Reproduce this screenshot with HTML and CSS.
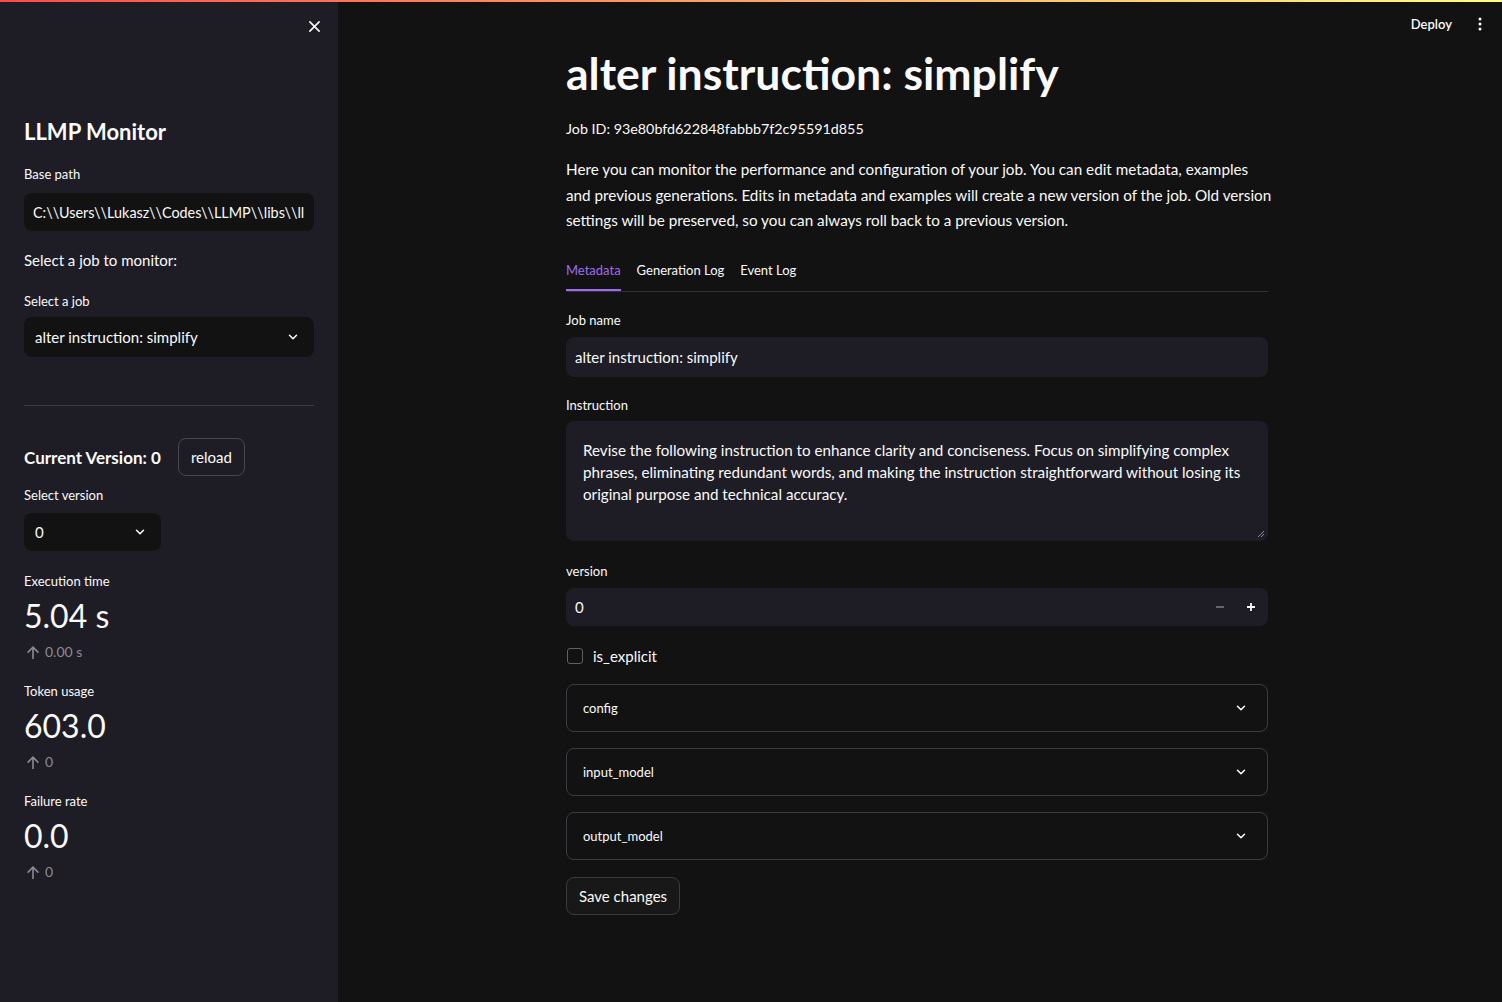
FILE: index.html
```html
<!DOCTYPE html>
<html lang="en">
<head>
<meta charset="utf-8">
<title>LLMP Monitor</title>
<link rel="stylesheet" href="styles.css">
</head>
<body>
<div class="decoration"></div>
<div class="app">
  <aside class="sidebar">
    <div class="sb-top">
      <button class="icon-btn close" aria-label="Close sidebar">
        <svg width="13" height="13" viewBox="0 0 14 14"><path d="M2 2L12 12M12 2L2 12" stroke="#fafafa" stroke-width="1.7" stroke-linecap="round"/></svg>
      </button>
    </div>
    <h2 class="sb-title">LLMP Monitor</h2>
    <div class="label sb-l1">Base path</div>
    <div class="field dark path"><span class="clip">C:\\Users\\Lukasz\\Codes\\LLMP\\libs\\ll</span></div>
    <p class="sb-text">Select a job to monitor:</p>
    <div class="label sb-l2">Select a job</div>
    <div class="select dark"><span>alter instruction: simplify</span>
      <svg class="chev" width="14" height="14" viewBox="0 0 24 24"><path d="M6 9l6 6 6-6" fill="none" stroke="#fafafa" stroke-width="2.6" stroke-linecap="round" stroke-linejoin="round"/></svg>
    </div>
    <hr class="divider">
    <div class="version-row">
      <span class="cur-version">Current Version: 0</span>
      <button class="btn">reload</button>
    </div>
    <div class="label sb-l3">Select version</div>
    <div class="select dark small"><span>0</span>
      <svg class="chev" width="14" height="14" viewBox="0 0 24 24"><path d="M6 9l6 6 6-6" fill="none" stroke="#fafafa" stroke-width="2.6" stroke-linecap="round" stroke-linejoin="round"/></svg>
    </div>
    <div class="metric first">
      <div class="label">Execution time</div>
      <div class="metric-value">5.04 s</div>
      <div class="delta"><svg width="14" height="15" viewBox="0 0 14 15"><path d="M7 14V2.2M1.6 7.6L7 2.2l5.4 5.4" fill="none" stroke="#8a8b94" stroke-width="1.6"/></svg>0.00 s</div>
    </div>
    <div class="metric">
      <div class="label">Token usage</div>
      <div class="metric-value">603.0</div>
      <div class="delta"><svg width="14" height="15" viewBox="0 0 14 15"><path d="M7 14V2.2M1.6 7.6L7 2.2l5.4 5.4" fill="none" stroke="#8a8b94" stroke-width="1.6"/></svg>0</div>
    </div>
    <div class="metric">
      <div class="label">Failure rate</div>
      <div class="metric-value">0.0</div>
      <div class="delta"><svg width="14" height="15" viewBox="0 0 14 15"><path d="M7 14V2.2M1.6 7.6L7 2.2l5.4 5.4" fill="none" stroke="#8a8b94" stroke-width="1.6"/></svg>0</div>
    </div>
  </aside>

  <main class="main">
    <header class="toolbar">
      <span class="deploy">Deploy</span>
      <svg class="kebab" width="4" height="14" viewBox="0 0 4 14"><circle cx="2" cy="2" r="1.5" fill="#fafafa"/><circle cx="2" cy="7" r="1.5" fill="#fafafa"/><circle cx="2" cy="12" r="1.5" fill="#fafafa"/></svg>
    </header>
    <div class="content">
      <h1 class="title">alter instruction: simplify</h1>
      <p class="job-id">Job ID: 93e80bfd622848fabbb7f2c95591d855</p>
      <p class="intro">Here you can monitor the performance and configuration of your job. You can edit metadata, examples and previous generations. Edits in metadata and examples will create a new version of the job. Old version settings will be preserved, so you can always roll back to a previous version.</p>
      <nav class="tabs">
        <span class="tab active">Metadata</span>
        <span class="tab">Generation Log</span>
        <span class="tab">Event Log</span>
      </nav>
      <div class="label m-l1">Job name</div>
      <div class="field light"><span>alter instruction: simplify</span></div>
      <div class="label m-l2">Instruction</div>
      <div class="textarea">Revise the following instruction to enhance clarity and conciseness. Focus on simplifying complex phrases, eliminating redundant words, and making the instruction straightforward without losing its original purpose and technical accuracy.
        <svg class="grip" width="8" height="8" viewBox="0 0 8 8"><path d="M7 1L1 7M7 4L4 7" stroke="#8a8b94" stroke-width="1"/></svg>
      </div>
      <div class="label m-l3">version</div>
      <div class="number">
        <span class="num-val">0</span>
        <svg class="step minus" width="10" height="10" viewBox="0 0 10 10"><path d="M1 5H9" stroke="#6b6c75" stroke-width="1.8"/></svg>
        <svg class="step plus" width="10" height="10" viewBox="0 0 10 10"><path d="M1 5H9M5 1V9" stroke="#fafafa" stroke-width="1.8"/></svg>
      </div>
      <label class="checkbox"><span class="box"></span>is_explicit</label>
      <div class="expander first"><span>config</span><svg class="chev" width="14" height="14" viewBox="0 0 24 24"><path d="M6 9l6 6 6-6" fill="none" stroke="#fafafa" stroke-width="2.6" stroke-linecap="round" stroke-linejoin="round"/></svg></div>
      <div class="expander"><span>input_model</span><svg class="chev" width="14" height="14" viewBox="0 0 24 24"><path d="M6 9l6 6 6-6" fill="none" stroke="#fafafa" stroke-width="2.6" stroke-linecap="round" stroke-linejoin="round"/></svg></div>
      <div class="expander"><span>output_model</span><svg class="chev" width="14" height="14" viewBox="0 0 24 24"><path d="M6 9l6 6 6-6" fill="none" stroke="#fafafa" stroke-width="2.6" stroke-linecap="round" stroke-linejoin="round"/></svg></div>
      <button class="btn save">Save changes</button>
    </div>
  </main>
</div>
</body>
</html>
```

FILE: styles.css
```css
* { box-sizing: border-box; }
html, body { margin: 0; padding: 0; }
body {
  background: #121212;
  color: #fafafa;
  font-family: "Lato", "Source Sans Pro", "Liberation Sans", sans-serif;
  font-size: 15px;
  height: 100vh;
  overflow: hidden;
}
p { margin: 0; }
h1, h2 { margin: 0; }

.decoration {
  height: 2px;
  background: linear-gradient(90deg, #ff4b4b, #fffd80);
}
.app {
  display: flex;
  height: calc(100vh - 2px);
}

/* Sidebar */
.sidebar {
  width: 338px;
  flex: none;
  background: #1e1d26;
  padding: 0 24px;
  display: flex;
  flex-direction: column;
}
.sb-top {
  height: 48px;
  display: flex;
  justify-content: flex-end;
  align-items: center;
  margin-right: -12px;
}
.icon-btn {
  background: none;
  border: 0;
  padding: 0;
  width: 24px;
  height: 24px;
  display: flex;
  align-items: center;
  justify-content: center;
}
.sb-title {
  font-size: 22px;
  font-weight: 700;
  line-height: 32px;
  margin-top: 66px;
}
.label {
  font-size: 13px;
  line-height: 20px;
  margin-bottom: 7px;
  color: #fafafa;
}
.sb-l1 { margin-top: 16px; margin-bottom: 9px; }
.field {
  height: 38px;
  border-radius: 8px;
  display: flex;
  align-items: center;
  padding: 0 9px;
  font-size: 15px;
  overflow: hidden;
  white-space: nowrap;
}
.field.path { font-size: 14.4px; }
.field.dark { background: #121212; }
.field.light { background: #1e1d26; height: 40px; }
.clip { overflow: hidden; }
.sb-text {
  margin-top: 17px;
  font-size: 15px;
  line-height: 24px;
}
.sb-l2 { margin-top: 19px; margin-bottom: 6px; }
.select {
  height: 40px;
  border-radius: 8px;
  display: flex;
  align-items: center;
  justify-content: space-between;
  padding: 0 14px 0 11px;
  font-size: 15px;
}
.select.dark { background: #121212; }
.select.small { width: 137px; height: 38px; }
.divider {
  border: 0;
  border-top: 1px solid #3b3b45;
  margin: 48px 0 0;
}
.version-row {
  display: flex;
  align-items: center;
  gap: 17px;
  margin-top: 32px;
}
.cur-version {
  font-size: 17px;
  font-weight: 700;
}
.btn {
  font-family: inherit;
  color: #fafafa;
  background: #1e1d26;
  border: 1px solid #474752;
  border-radius: 8px;
  height: 38px;
  padding: 0 12px;
  font-size: 15px;
}
.sb-l3 { margin-top: 9px; margin-bottom: 8px; }
.metric.first { margin-top: 20px; }
.metric { margin-top: 19px; }
.metric .label { margin-bottom: 3px; }
.metric-value {
  font-size: 32px;
  line-height: 43px;
}
.delta {
  display: flex;
  align-items: center;
  gap: 5px;
  color: #8a8b94;
  font-size: 14px;
  line-height: 20px;
  margin-top: 5px;
  padding-left: 2px;
}

/* Main */
.main {
  flex: 1;
  display: flex;
  flex-direction: column;
  position: relative;
}
.toolbar {
  height: 44px;
  display: flex;
  justify-content: flex-end;
  align-items: center;
  gap: 26px;
  padding-right: 20px;
}
.deploy {
  font-size: 13px;
  font-weight: 600;
}
.content {
  width: 702px;
  margin-left: 228px;
  display: flex;
  flex-direction: column;
  align-items: flex-start;
}
.content > * { align-self: stretch; }
.title {
  font-size: 44.5px;
  font-weight: 700;
  line-height: 52px;
  margin-top: 1px;
}
.job-id {
  font-size: 14.3px;
  line-height: 24px;
  margin-top: 18px;
}
.intro {
  font-size: 15.25px;
  line-height: 25.5px;
  margin-top: 16px;
  margin-right: -7px;
}
.tabs {
  display: flex;
  gap: 16px;
  height: 42px;
  align-items: center;
  margin-top: 16px;
  border-bottom: 1px solid #2f2f38;
}
.tab {
  font-size: 13px;
  height: 100%;
  display: flex;
  align-items: center;
  padding-top: 1px;
  border-bottom: 2px solid transparent;
  margin-bottom: -1px;
}
.tab.active {
  color: #9b6cf0;
  border-bottom-color: #9b6cf0;
}
.m-l1 { margin-top: 18px; }
.m-l2 { margin-top: 18px; margin-bottom: 6px; }
.m-l3 { margin-top: 20px; }
.textarea {
  position: relative;
  height: 120px;
  background: #1e1d26;
  border-radius: 8px;
  padding: 18px 17px;
  font-size: 15.2px;
  line-height: 22px;
}
.grip { position: absolute; right: 3px; bottom: 3px; }
.number {
  height: 38px;
  border-radius: 8px;
  background: #1e1d26;
  display: flex;
  align-items: center;
  padding: 0 12px 0 9px;
  font-size: 15px;
}
.num-val { flex: 1; }
.step.minus { margin-right: 21px; }
.checkbox {
  display: flex;
  align-items: center;
  gap: 10px;
  margin-top: 20px;
  font-size: 15px;
  line-height: 20px;
}
.box {
  width: 16px;
  height: 16px;
  border: 1px solid #5e5f68;
  border-radius: 3px;
  margin-left: 1px;
}
.expander {
  height: 48px;
  border: 1px solid #3b3b45;
  border-radius: 8px;
  display: flex;
  align-items: center;
  justify-content: space-between;
  padding: 0 19px 0 16px;
  font-size: 13px;
  margin-top: 16px;
}
.expander.first { margin-top: 18px; }
.save {
  align-self: flex-start;
  margin-top: 17px;
  background: #181818;
  border-color: #3a3a3f;
  height: 38px;
  padding: 0 12px;
}
```
